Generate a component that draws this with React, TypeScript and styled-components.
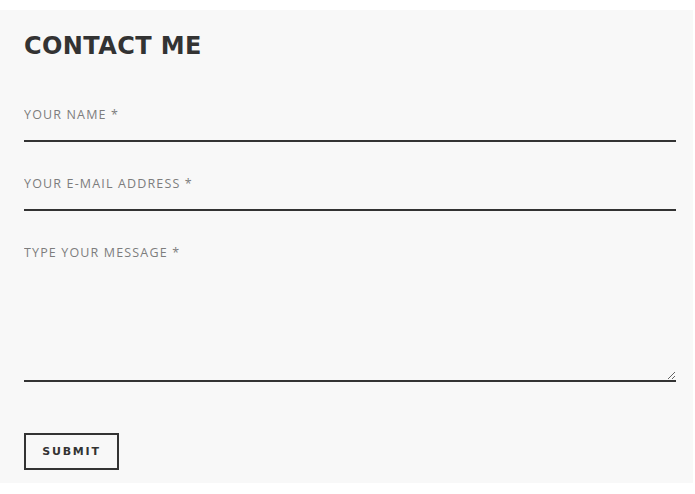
import styled, { createGlobalStyle } from "styled-components";

const GlobalStyle = createGlobalStyle`
  html, body {
    margin: 0;
    padding: 0;
    background: #ffffff;
  }
  * {
    box-sizing: border-box;
  }
`;

const Page = styled.div`
  padding-top: 10px;
  width: 695px;
`;

const Panel = styled.section`
  width: 693px;
  background: #f8f8f8;
  padding: 22px 17px 13px 24px;
`;

const Title = styled.h2`
  margin: 0 0 34px;
  font-family: "DejaVu Sans", sans-serif;
  font-weight: 700;
  font-size: 24px;
  line-height: 28px;
  color: #333333;
  letter-spacing: 0.4px;
`;

const Form = styled.form`
  display: flex;
  flex-direction: column;
  gap: 21px;
  width: 652px;
`;

const fieldText = `
  font-family: "Open Sans", sans-serif;
  font-size: 12.5px;
  font-weight: 400;
  letter-spacing: 1.15px;
  color: #555;
  background: transparent;
  border: none;
  border-bottom: 2px solid #333333;
  outline: none;
  width: 100%;
  &::placeholder {
    color: #7d7d7d;
    opacity: 1;
  }
`;

const Input = styled.input`
  ${fieldText}
  height: 48px;
  padding: 0 0 6px 0;
`;

const Message = styled.textarea`
  ${fieldText}
  height: 150px;
  padding: 12px 0 0 0;
  line-height: 18px;
  resize: vertical;
  display: block;
`;

const SubmitButton = styled.button`
  margin-top: 30px;
  align-self: flex-start;
  width: 95px;
  height: 37px;
  border: 2px solid #333333;
  background: transparent;
  font-family: "DejaVu Sans", sans-serif;
  font-weight: 700;
  font-size: 11px;
  letter-spacing: 1.8px;
  color: #333333;
  padding: 0;
  cursor: pointer;
`;

export default function App() {
  return (
    <Page>
      <GlobalStyle />
      <Panel>
        <Title>CONTACT ME</Title>
        <Form onSubmit={(e) => e.preventDefault()}>
          <Input type="text" placeholder="YOUR NAME *" />
          <Input type="email" placeholder="YOUR E-MAIL ADDRESS *" />
          <Message placeholder="TYPE YOUR MESSAGE *" />
          <SubmitButton type="submit">SUBMIT</SubmitButton>
        </Form>
      </Panel>
    </Page>
  );
}
